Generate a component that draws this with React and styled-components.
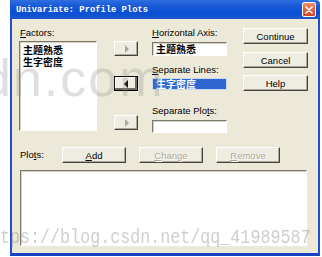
import React from 'react';
import styled, { createGlobalStyle, css } from 'styled-components';

const GlobalStyle = createGlobalStyle`
  html, body {
    margin: 0;
    padding: 0;
    background: #ffffff;
  }
  body {
    font-family: "Liberation Sans", Arial, sans-serif;
    overflow: hidden;
  }
`;

const Page = styled.div`
  position: relative;
  width: 322px;
  height: 257px;
  padding-left: 10px;
  box-sizing: border-box;
  overflow: hidden;
`;

const Dialog = styled.div`
  width: 310px;
  display: flex;
  flex-direction: column;
`;

const TitleBar = styled.div`
  height: 19px;
  display: flex;
  align-items: center;
  justify-content: space-between;
  padding: 0 4px 0 6px;
  background: linear-gradient(180deg, #2f6fe0 0%, #1657d8 35%, #0a4fd4 70%, #1a58cc 100%);
  border-top-right-radius: 4px;
`;

const Title = styled.span`
  font-family: "Liberation Mono", "Courier New", monospace;
  font-weight: bold;
  font-size: 8.8px;
  color: #ffffff;
  padding-top: 1px;
`;

const CloseButton = styled.div`
  width: 14px;
  height: 15px;
  box-sizing: border-box;
  border: 1px solid #ffffff;
  border-radius: 2px;
  background: linear-gradient(180deg, #f0906a 0%, #e05a36 60%, #d04a2a 100%);
  display: flex;
  align-items: center;
  justify-content: center;
`;

const Body = styled.div`
  height: 234px;
  background: #ece9d8;
  border-left: 2px solid #1c4fd6;
  border-right: 2px solid #1c4fd6;
  border-bottom: 3px solid #1842c4;
  display: flex;
  flex-direction: column;
`;

const TopSection = styled.div`
  height: 128px;
  display: flex;
  padding-left: 7px;
`;

const Column = styled.div`
  width: ${(p) => p.$width}px;
  margin-left: ${(p) => p.$gap || 0}px;
  display: flex;
  flex-direction: column;
  padding-top: ${(p) => p.$top}px;
`;

const Label = styled.div`
  height: 12px;
  line-height: 12px;
  font-size: 9.5px;
  color: #000000;
  white-space: nowrap;
  margin-top: ${(p) => p.$top || 0}px;
  padding-left: ${(p) => p.$indent || 0}px;
`;

const Key = styled.span`
  text-decoration: underline;
`;

const sunken = css`
  box-sizing: border-box;
  background: #ffffff;
  border-top: 1px solid #7b786c;
  border-left: 1px solid #7b786c;
  border-bottom: 1px solid #ffffff;
  border-right: 1px solid #ffffff;
  box-shadow: inset 1px 1px 0 #d6d2c2;
`;

const ListBox = styled.div`
  ${sunken};
  height: ${(p) => p.$height}px;
  margin-top: ${(p) => p.$top || 0}px;
  padding: 2px 2px;
  display: flex;
  flex-direction: column;
`;

const Field = styled.div`
  ${sunken};
  height: ${(p) => p.$height}px;
  margin-top: ${(p) => p.$top || 0}px;
  padding: 0 2px;
  display: flex;
  align-items: center;
`;

const Selected = styled.div`
  height: ${(p) => p.$height}px;
  margin-top: ${(p) => p.$top || 0}px;
  box-sizing: border-box;
  background: #2f66d0;
  border: 1px solid #c8d6f0;
  padding: 0 2px;
  display: flex;
  align-items: center;
`;

const Cjk = styled.span`
  font-family: "Noto Sans CJK SC", "Liberation Sans", sans-serif;
  font-weight: 700;
  font-size: 10px;
  line-height: 10px;
  color: ${(p) => (p.$inverse ? '#ffffff' : '#000000')};
  padding-left: 1px;
`;

const ListItem = styled(Cjk)`
  height: 10.5px;
  line-height: 10.5px;
  margin-top: 1px;
`;

const raised = css`
  box-sizing: border-box;
  background: #efede2;
  border-top: 1px solid #ffffff;
  border-left: 1px solid #ffffff;
  border-bottom: 1px solid #46443c;
  border-right: 1px solid #46443c;
  box-shadow: inset -1px -1px 0 #aca899;
`;

const ArrowButton = styled.div`
  ${raised};
  width: 24px;
  height: 15px;
  margin-top: ${(p) => p.$top || 0}px;
  display: flex;
  align-items: center;
  justify-content: center;
  ${(p) =>
    p.$default &&
    css`
      outline: 1px solid #000000;
      outline-offset: -1px;
      box-shadow: inset -2px -2px 0 #6f6c62, inset 1px 1px 0 #ffffff;
    `}
`;

const PushButton = styled.div`
  ${raised};
  width: ${(p) => p.$width || 65}px;
  height: 16px;
  margin-top: ${(p) => p.$top || 0}px;
  margin-left: ${(p) => p.$gap || 0}px;
  display: flex;
  align-items: center;
  justify-content: center;
  font-size: 9.5px;
  color: ${(p) => (p.$disabled ? '#aca899' : '#000000')};
  text-shadow: ${(p) => (p.$disabled ? '1px 1px 0 #ffffff' : 'none')};
`;

const PlotsRow = styled.div`
  height: 16px;
  display: flex;
  align-items: center;
  padding-left: 8px;
`;

const PlotsLabel = styled(Label)`
  width: 42px;
`;

const PlotsList = styled.div`
  ${sunken};
  height: 76px;
  margin: 7px 0 0 8px;
  width: 287px;
`;

const Watermark = styled.div`
  position: absolute;
  left: ${(p) => p.$left}px;
  top: ${(p) => p.$top}px;
  white-space: nowrap;
  pointer-events: none;
`;

const BigMark = styled(Watermark)`
  font-family: "Liberation Sans", Arial, sans-serif;
  font-size: 52px;
  line-height: 52px;
  letter-spacing: 2px;
  color: rgba(130, 130, 130, 0.26);
`;

const UrlMark = styled(Watermark)`
  font-family: "Liberation Mono", "Courier New", monospace;
  font-size: 16.7px;
  line-height: 18px;
  transform: scaleY(1.25);
  transform-origin: left top;
  color: rgba(110, 110, 110, 0.34);
`;

function Triangle({ dir, disabled }) {
  const fill = disabled ? '#aca899' : '#000000';
  return (
    <svg width="5" height="8" viewBox="0 0 5 8">
      {dir === 'left' ? (
        <polygon points="4,0 4,8 0,4" fill={fill} />
      ) : (
        <polygon points="1,0 1,8 5,4" fill={fill} />
      )}
    </svg>
  );
}

function CloseIcon() {
  return (
    <svg width="8" height="8" viewBox="0 0 8 8">
      <path d="M1 1 L7 7 M7 1 L1 7" stroke="#ffffff" strokeWidth="1.6" strokeLinecap="round" />
    </svg>
  );
}

export default function App() {
  return (
    <>
      <GlobalStyle />
      <Page>
        <Dialog>
          <TitleBar>
            <Title>Univariate: Profile Plots</Title>
            <CloseButton>
              <CloseIcon />
            </CloseButton>
          </TitleBar>
          <Body>
            <TopSection>
              <Column $width={78} $top={8}>
                <Label $indent={1}>
                  <Key>F</Key>actors:
                </Label>
                <ListBox $height={90} $top={2}>
                  <ListItem>主题熟悉</ListItem>
                  <ListItem>生字密度</ListItem>
                </ListBox>
              </Column>
              <Column $width={24} $gap={17} $top={22}>
                <ArrowButton>
                  <Triangle dir="right" disabled />
                </ArrowButton>
                <ArrowButton $top={20} $default>
                  <Triangle dir="left" />
                </ArrowButton>
                <ArrowButton $top={24}>
                  <Triangle dir="right" disabled />
                </ArrowButton>
              </Column>
              <Column $width={75} $gap={14} $top={8}>
                <Label>
                  <Key>H</Key>orizontal Axis:
                </Label>
                <Field $height={14} $top={3}>
                  <Cjk>主题熟悉</Cjk>
                </Field>
                <Label $top={8}>
                  <Key>S</Key>eparate Lines:
                </Label>
                <Selected $height={12} $top={2}>
                  <Cjk $inverse>生字密度</Cjk>
                </Selected>
                <Label $top={15}>
                  Separate Plo<Key>t</Key>s:
                </Label>
                <Field $height={13} $top={3} />
              </Column>
              <Column $width={65} $gap={16} $top={9}>
                <PushButton>Continue</PushButton>
                <PushButton $top={8}>Cancel</PushButton>
                <PushButton $top={7}>Help</PushButton>
              </Column>
            </TopSection>
            <PlotsRow>
              <PlotsLabel>
                Plo<Key>t</Key>s:
              </PlotsLabel>
              <PushButton $width={64}>
                <span>
                  <Key>A</Key>dd
                </span>
              </PushButton>
              <PushButton $width={64} $gap={13} $disabled>
                <span>
                  <Key>C</Key>hange
                </span>
              </PushButton>
              <PushButton $width={64} $gap={13} $disabled>
                <span>
                  <Key>R</Key>emove
                </span>
              </PushButton>
            </PlotsRow>
            <PlotsList />
          </Body>
        </Dialog>
        <BigMark $left={-74} $top={52}>csdn.com</BigMark>
        <UrlMark $left={-20} $top={227}>https://blog.csdn.net/qq_41989587</UrlMark>
      </Page>
    </>
  );
}
